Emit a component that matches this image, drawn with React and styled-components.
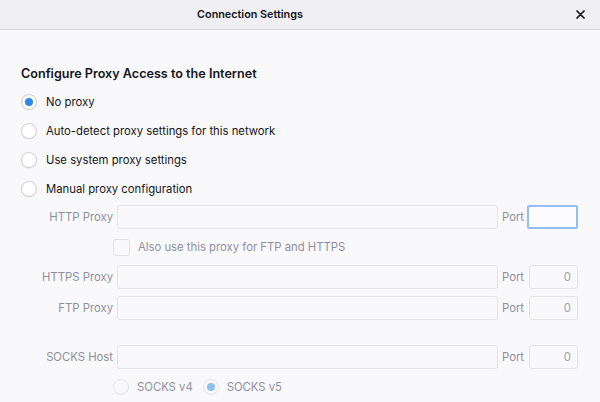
import React from 'react';
import styled, { createGlobalStyle } from 'styled-components';

const Global = createGlobalStyle`
  html, body { margin: 0; padding: 0; }
  body {
    background: #f9f9fb;
    font-family: Inter, "Noto Sans", sans-serif;
    color: #15141a;
    width: 600px;
    height: 402px;
    overflow: hidden;
  }
`;

const Dialog = styled.div`
  width: 600px;
  height: 402px;
  display: flex;
  flex-direction: column;
  background: #f9f9fb;
`;

const TitleBar = styled.div`
  height: 29px;
  flex: none;
  display: flex;
  align-items: center;
  justify-content: center;
  padding-right: 100px;
  position: relative;
  background: #f0f0f4;
  border-bottom: 1px solid #d7d7db;
  font-size: 10.8px;
  font-weight: 600;
`;

const Close = styled.div`
  position: absolute;
  right: 15px;
  top: 10px;
  width: 9px;
  height: 9px;
  display: flex;
`;

const Body = styled.div`
  padding: 36px 21px 0 21px;
  display: flex;
  flex-direction: column;
`;

const Heading = styled.div`
  font-size: 12.6px;
  font-weight: 600;
  line-height: 16px;
  margin-bottom: 5px;
`;

const RadioRow = styled.label`
  display: flex;
  align-items: center;
  gap: 9px;
  height: 29px;
  font-size: 11.3px;
  color: #15141a;
`;

const Circle = styled.span`
  width: 16px;
  height: 16px;
  border-radius: 50%;
  box-sizing: border-box;
  border: 1px solid ${p => (p.$disabled ? '#e3e3e8' : '#cfcfd4')};
  background: ${p => (p.$disabled ? '#f9f9fb' : '#fff')};
  box-shadow: ${p => (p.$disabled ? 'none' : '0 0.5px 1px rgba(0,0,0,0.08)')};
  display: flex;
  align-items: center;
  justify-content: center;
  flex: none;
  &::after {
    content: '';
    width: 8px;
    height: 8px;
    border-radius: 50%;
    background: ${p => (p.$disabled ? '#8cc0ef' : '#2f8ae5')};
    display: ${p => (p.$checked ? 'block' : 'none')};
  }
`;

const Grid = styled.div`
  margin-top: 2px;
  display: grid;
  grid-template-columns: 92px 381px 21px 51px;
  column-gap: 4px;
  align-items: center;
  font-size: 11.3px;
  color: #8f8f9d;
`;

const Label = styled.div`
  text-align: ${p => (p.$left ? 'left' : 'right')};
  margin-top: ${p => p.$top || 0}px;
`;

const Field = styled.div`
  height: 24px;
  box-sizing: border-box;
  border: 1px solid #e4e4e8;
  border-radius: 3px;
  background: #f9f9fb;
  margin-top: ${p => p.$top || 0}px;
  display: flex;
  align-items: center;
  justify-content: flex-end;
  padding-right: 6px;
  color: #a0a0aa;
  ${p => p.$port && !p.$focus && `margin-left: 2px;`}
  ${p => p.$focus && `
    border: 2px solid #93bdf3;
    border-radius: 2px;
    background: #fcfcfe;
  `}
`;

const Sub = styled.div`
  grid-column: 2 / 5;
  display: flex;
  align-items: center;
  gap: 8px;
  height: ${p => p.$h}px;
  margin-left: -4px;
`;

const Check = styled.span`
  width: 17px;
  height: 17px;
  box-sizing: border-box;
  border: 1px solid #e0e0e6;
  border-radius: 3px;
  background: #f9f9fb;
`;

const SubRadio = styled.span`
  display: flex;
  align-items: center;
  gap: 8px;
  margin-right: 2px;
`;

function Radio({ checked, children }) {
  return (
    <RadioRow>
      <Circle $checked={checked} />
      {children}
    </RadioRow>
  );
}

function Row({ label, top, focus, value }) {
  return (
    <>
      <Label $top={top}>{label}</Label>
      <Field $top={top} />
      <Label $top={top} $left>Port</Label>
      <Field $top={top} $focus={focus} $port>{value}</Field>
    </>
  );
}

export default function App() {
  return (
    <Dialog>
      <Global />
      <TitleBar>
        Connection Settings
        <Close>
          <svg width="9" height="9" viewBox="0 0 9 9">
            <path d="M1 1 L8 8 M8 1 L1 8" stroke="#15141a" strokeWidth="1.7" strokeLinecap="round" />
          </svg>
        </Close>
      </TitleBar>
      <Body>
        <Heading>Configure Proxy Access to the Internet</Heading>
        <Radio checked>No proxy</Radio>
        <Radio>Auto-detect proxy settings for this network</Radio>
        <Radio>Use system proxy settings</Radio>
        <Radio>Manual proxy configuration</Radio>
        <Grid>
          <Row label="HTTP Proxy" focus />
          <Sub $h={36}>
            <Check />
            Also use this proxy for FTP and HTTPS
          </Sub>
          <Row label="HTTPS Proxy" value="0" />
          <Row label="FTP Proxy" top={7} value="0" />
          <Row label="SOCKS Host" top={25} value="0" />
          <Sub $h={36}>
            <SubRadio>
              <Circle $disabled />
              SOCKS v4
            </SubRadio>
            <SubRadio>
              <Circle $disabled $checked />
              SOCKS v5
            </SubRadio>
          </Sub>
        </Grid>
      </Body>
    </Dialog>
  );
}
